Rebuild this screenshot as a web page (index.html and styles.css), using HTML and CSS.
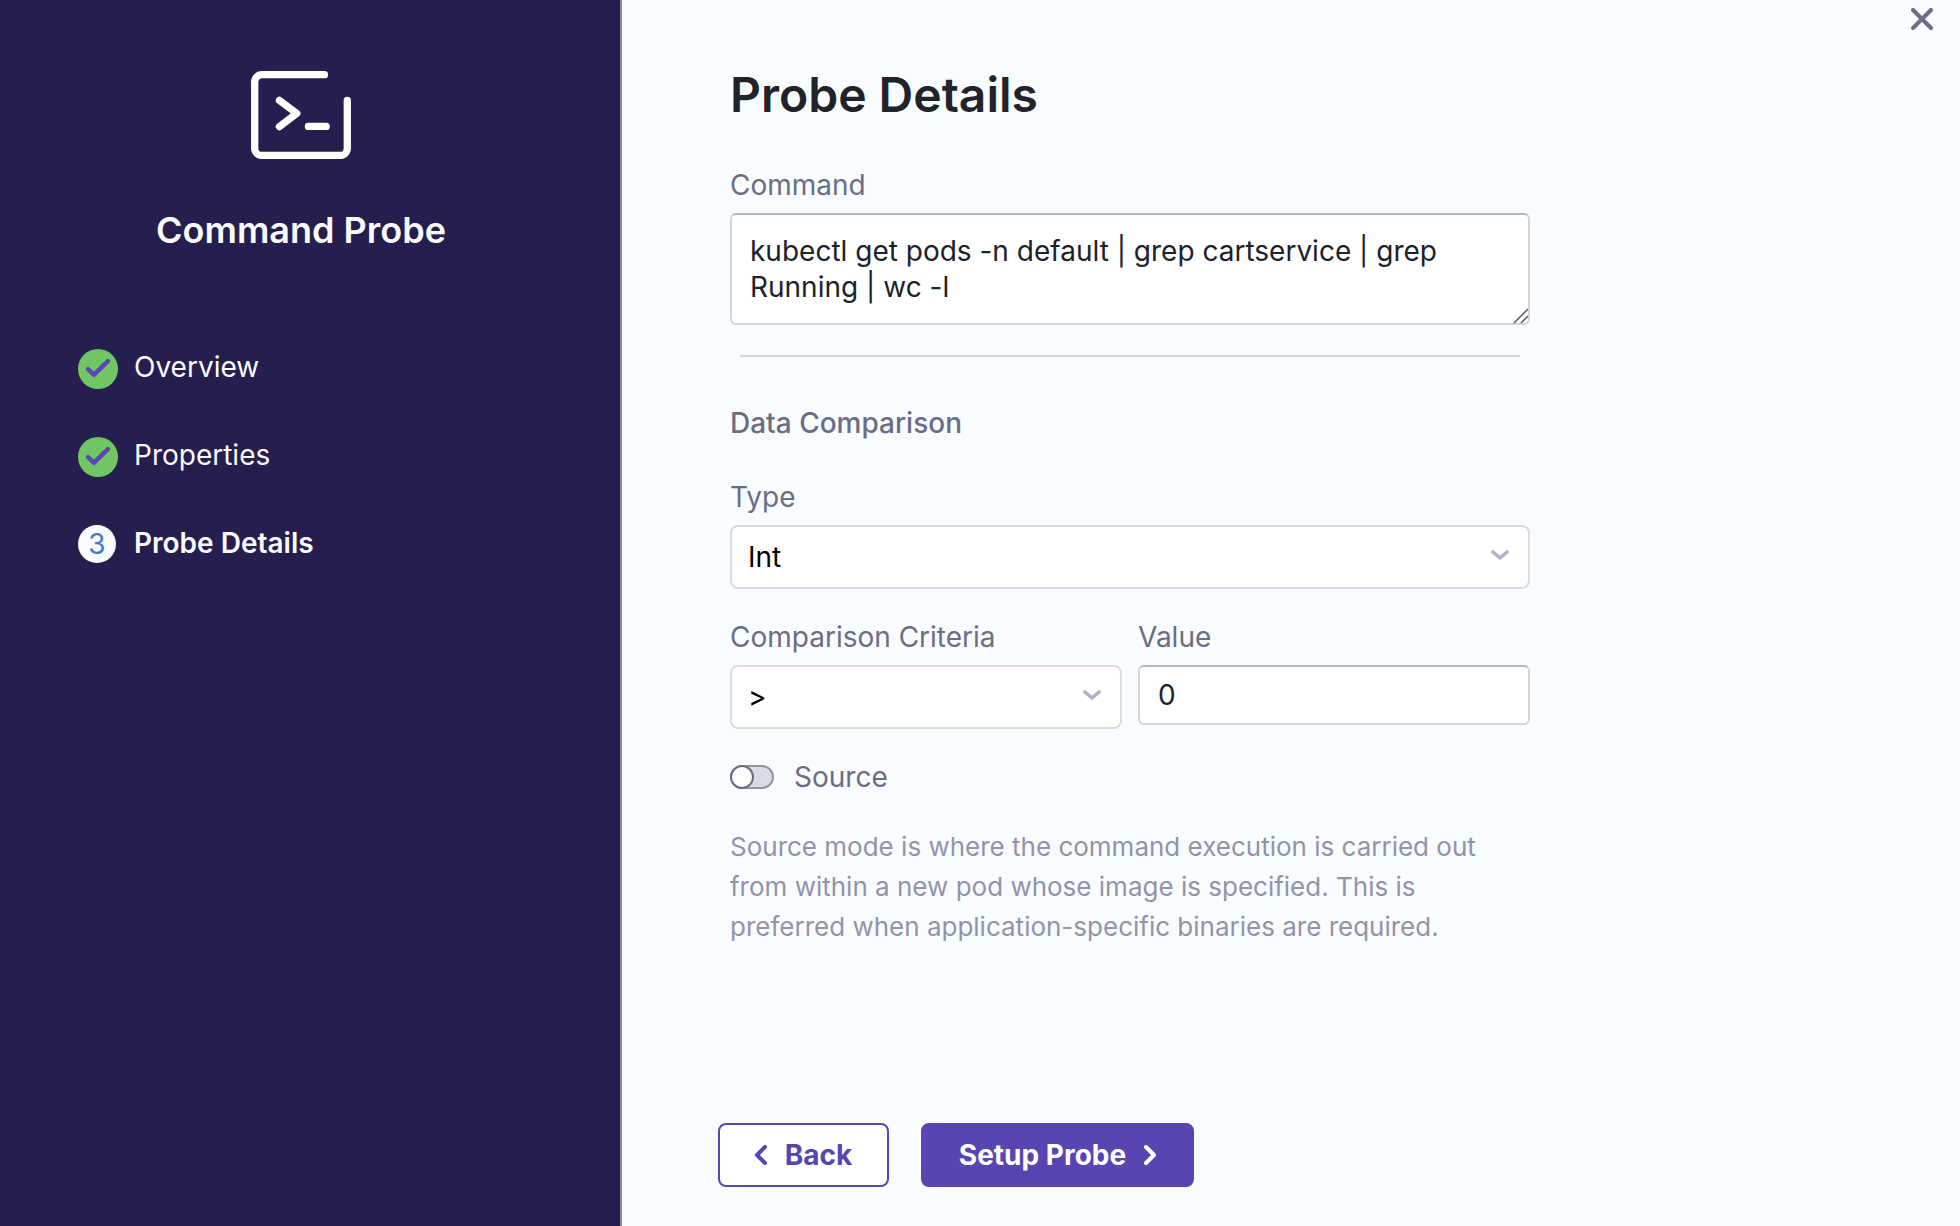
FILE: index.html
```html
<!DOCTYPE html>
<html lang="en">
<head>
    <meta charset="UTF-8">
    <meta name="viewport" content="width=device-width, initial-scale=1">
    <title>Command Probe</title>
    <link rel="stylesheet" href="styles.css">
</head>
<body>
    <div class="container">
        <aside class="sidebar">
            <div class="probe">
                <svg class="probe-icon" viewBox="0 0 100 88" aria-hidden="true">
                    <path d="M73.5 3.7H11a7.3 7.3 0 0 0-7.3 7.3v66.2a7.3 7.3 0 0 0 7.3 7.3h78a7.3 7.3 0 0 0 7.3-7.3V29.5"/>
                    <path d="M28.4 29.4l17.4 13-17.4 13.2M57.4 55.4h17.8"/>
                </svg>
                <h2>Command Probe</h2>
            </div>
            <ol class="steps">
                <li>
                    <svg class="done" viewBox="0 0 40 40" aria-hidden="true">
                        <circle cx="20" cy="20" r="20"/>
                        <path d="M10 20l5.800 5.800L30 12.200"/>
                    </svg>
                    <span>Overview</span>
                </li>
                <li>
                    <svg class="done" viewBox="0 0 40 40" aria-hidden="true">
                        <circle cx="20" cy="20" r="20"/>
                        <path d="M10 20l5.800 5.800L30 12.200"/>
                    </svg>
                    <span>Properties</span>
                </li>
                <li class="current">
                    <span class="number">3</span>
                    <span>Probe Details</span>
                </li>
            </ol>
        </aside>
        <main class="content">
            <button class="close" type="button" aria-label="Close">
                <svg viewBox="0 0 22 22" aria-hidden="true"><path d="M2 2l18 18M20 2L2 20"/></svg>
            </button>
            <form class="form">
                <h1>Probe Details</h1>
                <div class="field">
                    <label for="command">Command</label>
                    <div class="area">
                        <textarea id="command" rows="2">kubectl get pods -n default | grep cartservice | grep Running | wc -l</textarea>
                        <svg class="grip" viewBox="0 0 16 16" aria-hidden="true"><path d="M1 15L15 1M8 15l7-7"/></svg>
                    </div>
                </div>
                <hr>
                <h3>Data Comparison</h3>
                <div class="field">
                    <label for="type">Type</label>
                    <div class="select">
                        <select id="type">
                            <option>Int</option>
                            <option>Float</option>
                            <option>String</option>
                        </select>
                        <svg viewBox="0 0 18 10" aria-hidden="true"><path d="M2 2l7 6 7-6"/></svg>
                    </div>
                </div>
                <div class="row">
                    <div class="field">
                        <label for="criteria">Comparison Criteria</label>
                        <div class="select">
                            <select id="criteria">
                                <option>&gt;</option>
                                <option>&lt;</option>
                                <option>==</option>
                            </select>
                            <svg viewBox="0 0 18 10" aria-hidden="true"><path d="M2 2l7 6 7-6"/></svg>
                        </div>
                    </div>
                    <div class="field">
                        <label for="value">Value</label>
                        <input id="value" type="text" value="0">
                    </div>
                </div>
                <div class="switch">
                    <input id="source" type="checkbox" role="switch">
                    <label for="source">Source</label>
                </div>
                <p class="help">Source mode is where the command execution is carried out from within a new pod whose image is specified. This is preferred when application-specific binaries are required.</p>
            </form>
            <div class="buttons">
                <button class="btn back" type="button">
                    <svg viewBox="0 0 12 20" aria-hidden="true"><path d="M10 2l-8 8 8 8"/></svg>
                    Back
                </button>
                <button class="btn next" type="button">
                    Setup Probe
                    <svg viewBox="0 0 12 20" aria-hidden="true"><path d="M2 2l8 8-8 8"/></svg>
                </button>
            </div>
        </main>
    </div>
</body>
</html>
```
FILE: styles.css
```css
*, *::before{
    box-sizing: border-box;
    padding: 0;
    margin: 0;
}
body{
    font-family: Inter, "Liberation Sans", sans-serif;
    font-size: 28px;
    line-height: 40px;
    color: #6b6d85;
    background: #f8fcff;
}
input, select, textarea, button{
    font: inherit;
}
svg{
    display: block;
    fill: none;
    stroke: currentColor;
    stroke-width: 4;
    stroke-linecap: round;
    stroke-linejoin: round;
}
.container{
    display: flex;
    min-height: 100vh;
}

/* sidebar */
.sidebar{
    flex: 0 0 622px;
    padding: 71px 96px 40px 78px;
    color: #fafbfc;
    background: #261e4f;
    border-right: 2px solid #8d8c93;
}
.probe{
    display: flex;
    flex-direction: column;
    align-items: center;
    gap: 49px;
}
.probe-icon{
    width: 100px;
    height: 88px;
    color: #fff;
    stroke-width: 7.3;
}
.probe h2{
    font-size: 36px;
    line-height: 44px;
    font-weight: 600;
}
.steps{
    display: grid;
    gap: 48px;
    margin-top: 97px;
    list-style: none;
}
.steps li{
    display: grid;
    grid-template-columns: 40px 1fr;
    column-gap: 16px;
    align-items: start;
    line-height: 36px;
}
.steps .current{
    font-weight: 600;
}
.done{
    width: 40px;
    height: 40px;
    color: #5b44ba;
    stroke-width: 4.4;
}
.done circle{
    fill: #70c663;
    stroke: none;
}
.number{
    width: 38px;
    height: 38px;
    line-height: 38px;
    border-radius: 50%;
    text-align: center;
    font-weight: 400;
    color: #3b7ccd;
    background: #fafbfc;
}

/* form */
.content{
    position: relative;
    flex: 1;
    display: flex;
    flex-direction: column;
    justify-content: space-between;
    padding: 64px 96px 39px;
}
.close{
    position: absolute;
    top: 0;
    right: 19px;
    padding: 8px;
    border: 0;
    background: none;
    color: #6b6d85;
    cursor: pointer;
}
.close svg{
    width: 22px;
    height: 22px;
}
.form{
    max-width: 824px;
    padding: 0 12px;
}
h1{
    margin-bottom: 40px;
    font-size: 48px;
    line-height: 61px;
    font-weight: 600;
    color: #22222a;
}
h3{
    margin: 46px 0 34px;
    font-size: 28px;
    font-weight: 500;
}
hr{
    margin: 30px 10px 0;
    border: 0;
    border-top: 2px solid #d6d9dc;
}
.field label{
    display: block;
    margin-bottom: 8px;
}
.area, .select{
    position: relative;
}
textarea, .field input, select{
    display: block;
    width: 100%;
    color: #1c222b;
    background: #fff;
    border: 2px solid #d4d5d8;
    border-radius: 6px;
}
textarea{
    padding: 18px;
    line-height: 36px;
    border-top-color: #b5b7ba;
    resize: none;
}
.grip{
    position: absolute;
    right: 1px;
    bottom: 1px;
    width: 16px;
    height: 16px;
    color: #55565a;
    stroke-width: 1.5;
    stroke-linecap: butt;
    pointer-events: none;
}
.field input{
    height: 60px;
    padding: 0 18px;
    border-top-color: #b5b7ba;
}
select{
    height: 64px;
    padding: 0 56px 0 16px;
    color: #000;
    border-color: #d9dae6;
    border-radius: 8px;
    appearance: none;
}
.select svg{
    position: absolute;
    top: 25px;
    right: 21px;
    width: 18px;
    height: 10px;
    color: #b0b1c3;
    stroke-width: 3.6;
    pointer-events: none;
}
.row{
    display: grid;
    grid-template-columns: 1fr 1fr;
    gap: 16px;
    margin: 28px 0;
}
.switch{
    display: flex;
    align-items: center;
    gap: 20px;
}
.switch input{
    width: 44px;
    height: 24px;
    appearance: none;
    border: 2px solid #9293ab;
    border-radius: 12px;
    background: #d9dae6;
}
.switch input::before{
    content: "";
    display: block;
    width: 24px;
    height: 24px;
    margin: -2px;
    border: 2px solid #6b6d85;
    border-radius: 50%;
    background: #fff;
}
.switch input:checked::before{
    margin-left: 18px;
}
.help{
    margin-top: 30px;
    font-size: 26px;
    color: #9293ab;
}

/* buttons */
.buttons{
    display: flex;
    gap: 32px;
}
.btn{
    display: flex;
    align-items: center;
    justify-content: center;
    gap: 18px;
    height: 64px;
    border: 2px solid #5845b2;
    border-radius: 8px;
    font-weight: 700;
    cursor: pointer;
}
.btn svg{
    width: 12px;
    height: 20px;
}
.back{
    min-width: 171px;
    color: #5845b2;
    background: #fff;
}
.next{
    min-width: 273px;
    color: #fff;
    background: #5845b2;
}
```
